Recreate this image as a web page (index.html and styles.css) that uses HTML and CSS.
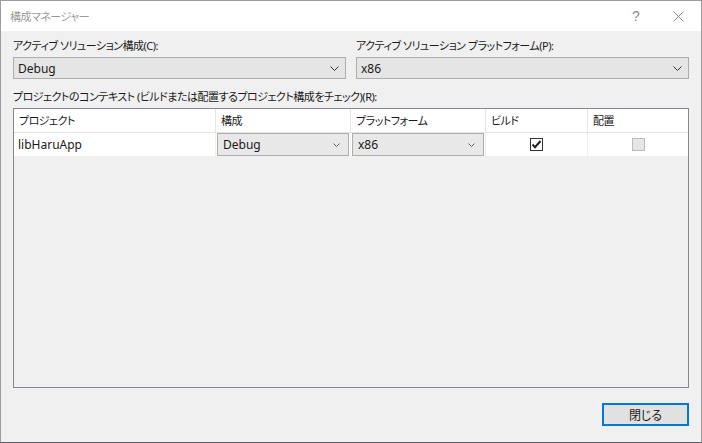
FILE: index.html
```html
<!DOCTYPE html>
<html lang="ja">
<head>
<meta charset="utf-8">
<title>構成マネージャー</title>
<link rel="stylesheet" href="styles.css">
</head>
<body>
<div class="window">
  <div class="titlebar">
    <span class="title">構成マネージャー</span>
    <span class="help">?</span>
    <span class="close">
      <svg width="11" height="11" viewBox="0 0 11 11"><path d="M0.5 0.5 L10.5 10.5 M10.5 0.5 L0.5 10.5" stroke="#8a8a8a" stroke-width="1" fill="none"/></svg>
    </span>
  </div>
  <div class="content">
    <div class="topgrid">
      <div class="field">
        <div class="label">アクティブ ソリューション構成(C):</div>
        <div class="select">
          <span>Debug</span>
          <svg class="chev" width="9" height="5" viewBox="0 0 9 5"><path d="M0.5 0.5 L4.5 4.5 L8.5 0.5" stroke="#333" stroke-width="1" fill="none"/></svg>
        </div>
      </div>
      <div class="field">
        <div class="label">アクティブ ソリューション プラットフォーム(P):</div>
        <div class="select">
          <span>x86</span>
          <svg class="chev" width="9" height="5" viewBox="0 0 9 5"><path d="M0.5 0.5 L4.5 4.5 L8.5 0.5" stroke="#333" stroke-width="1" fill="none"/></svg>
        </div>
      </div>
    </div>
    <div class="label label2">プロジェクトのコンテキスト (ビルドまたは配置するプロジェクト構成をチェック)(R):</div>
    <div class="list">
      <div class="grid header">
        <div class="hcell">プロジェクト</div>
        <div class="hcell">構成</div>
        <div class="hcell">プラットフォーム</div>
        <div class="hcell">ビルド</div>
        <div class="hcell">配置</div>
      </div>
      <div class="grid row">
        <div class="cell text">libHaruApp</div>
        <div class="cell">
          <div class="cselect"><span>Debug</span>
            <svg class="cchev" width="7" height="4" viewBox="0 0 7 4"><path d="M0.5 0.5 L3.5 3.5 L6.5 0.5" stroke="#666" stroke-width="1" fill="none"/></svg>
          </div>
        </div>
        <div class="cell">
          <div class="cselect"><span>x86</span>
            <svg class="cchev" width="7" height="4" viewBox="0 0 7 4"><path d="M0.5 0.5 L3.5 3.5 L6.5 0.5" stroke="#666" stroke-width="1" fill="none"/></svg>
          </div>
        </div>
        <div class="cell center">
          <span class="check on">
            <svg width="11" height="11" viewBox="0 0 11 11"><path d="M1.5 5.5 L4 8.2 L9.5 2" stroke="#222" stroke-width="2" fill="none"/></svg>
          </span>
        </div>
        <div class="cell center"><span class="check off"></span></div>
      </div>
    </div>
    <div class="buttons">
      <button class="btn">閉じる</button>
    </div>
  </div>
</div>
</body>
</html>
```
FILE: styles.css
```css
html, body {
  margin: 0;
  padding: 0;
  background: #ffffff;
}
body {
  width: 702px;
  height: 443px;
  overflow: hidden;
  font-family: "Noto Sans", "Noto Sans CJK JP", sans-serif;
  font-size: 12px;
  color: #1a1a1a;
  font-feature-settings: "palt";
}
.window {
  box-sizing: border-box;
  width: 702px;
  height: 443px;
  border: 1px solid #9d9d9d;
  border-bottom-color: #5a5d63;
  display: flex;
  flex-direction: column;
}
.titlebar {
  height: 30px;
  background: #ffffff;
  display: flex;
  align-items: center;
  padding-left: 9px;
  color: #9a9a9a;
}
.title {
  flex: 1;
  font-family: "Noto Sans CJK JP", sans-serif;
  font-size: 11px;
  letter-spacing: -0.5px;
  color: #9a9a9a;
}
.help {
  width: 16px;
  text-align: center;
  font-family: "Liberation Sans", sans-serif;
  font-size: 14px;
  color: #8a8a8a;
  margin-right: 29px;
}
.close {
  width: 11px;
  height: 11px;
  margin-right: 17px;
  display: flex;
}
.content {
  flex: 1;
  background: #f0f0f0;
  padding: 6px 12px 0 12px;
  display: flex;
  flex-direction: column;
}
.topgrid {
  display: grid;
  grid-template-columns: 333px 333px;
  column-gap: 10px;
}
.label {
  height: 18px;
  line-height: 18px;
  margin-bottom: 2px;
  white-space: nowrap;
  color: #1a1a1a;
  font-size: 11px;
  letter-spacing: -0.5px;
}
.label2 {
  margin-top: 9px;
}
.select {
  box-sizing: border-box;
  height: 22px;
  border: 1px solid #adadad;
  background: #e5e5e5;
  display: flex;
  align-items: center;
  padding-left: 4px;
  padding-right: 6px;
}
.select span {
  flex: 1;
}
.chev {
  display: block;
}
.list {
  box-sizing: border-box;
  height: 280px;
  border: 1px solid #828790;
  background: #f0f0f0;
}
.grid {
  display: grid;
  grid-template-columns: 201px 134px 134px 101px 100px;
  column-gap: 1px;
}
.header {
  height: 23px;
  background: #e5e5e5;
  border-bottom: 1px solid #e5e5e5;
}
.hcell {
  background: #ffffff;
  line-height: 23px;
  padding-left: 5px;
  white-space: nowrap;
  color: #1a1a1a;
  font-size: 11px;
  letter-spacing: -0.5px;
}
.row {
  height: 23px;
  background: #f0f0f0;
}
.cell {
  background: #ffffff;
  display: flex;
  align-items: center;
}
.cell.text {
  padding-left: 4px;
}
.cell.center {
  justify-content: center;
}
.cselect {
  box-sizing: border-box;
  width: 132px;
  height: 23px;
  margin-left: 1px;
  border: 1px solid #adadad;
  background: #e8e8e8;
  display: flex;
  align-items: center;
  padding-left: 5px;
  padding-right: 8px;
}
.cselect span {
  flex: 1;
}
.cchev {
  display: block;
}
.check {
  box-sizing: border-box;
  width: 13px;
  height: 13px;
  display: flex;
  align-items: center;
  justify-content: center;
}
.check.on {
  border: 1px solid #333333;
  background: #ffffff;
}
.check.off {
  border: 1px solid #bcbcbc;
  background: #e6e6e6;
}
.buttons {
  display: flex;
  justify-content: flex-end;
  margin-top: 15px;
}
.btn {
  box-sizing: border-box;
  width: 87px;
  height: 23px;
  border: 2px solid #0078d7;
  background: #e1e1e1;
  font-family: "Noto Sans CJK JP", sans-serif;
  font-feature-settings: "palt";
  font-size: 12px;
  color: #1a1a1a;
  padding: 0;
  margin: 0;
}
```
